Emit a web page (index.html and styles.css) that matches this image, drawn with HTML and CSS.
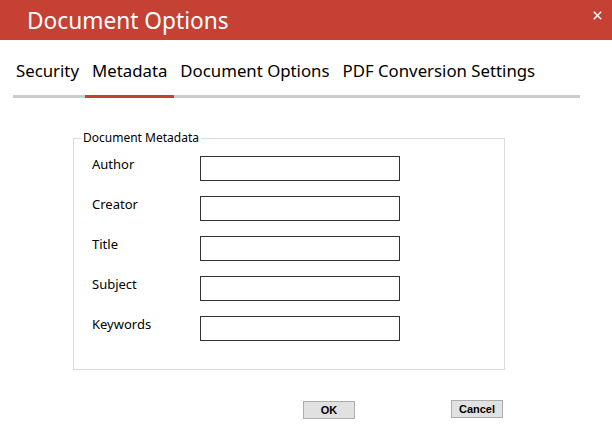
FILE: index.html
```html
<!DOCTYPE html>
<html lang="en">
<head>
<meta charset="utf-8">
<title>Document Options</title>
<link rel="stylesheet" href="styles.css">
</head>
<body>
<div class="dialog">
  <header class="titlebar">
    <h1 class="title">Document Options</h1>
    <span class="close" aria-label="Close">
      <svg width="9" height="9" viewBox="0 0 9 9"><path d="M0.8 0.8 L8.2 8.2 M8.2 0.8 L0.8 8.2" stroke="#fff" stroke-width="1.5" fill="none"/></svg>
    </span>
  </header>
  <nav class="tabs">
    <span class="tab">Security</span>
    <span class="tab active">Metadata</span>
    <span class="tab">Document Options</span>
    <span class="tab">PDF Conversion Settings</span>
  </nav>
  <fieldset class="group">
    <legend class="group-title">Document Metadata</legend>
    <div class="form">
      <label class="label">Author</label><input class="field" type="text">
      <label class="label">Creator</label><input class="field" type="text">
      <label class="label">Title</label><input class="field" type="text">
      <label class="label">Subject</label><input class="field" type="text">
      <label class="label">Keywords</label><input class="field" type="text">
    </div>
  </fieldset>
  <div class="buttons">
    <button class="btn btn-ok">OK</button>
    <button class="btn btn-cancel">Cancel</button>
  </div>
</div>
</body>
</html>
```

FILE: styles.css
```css
html, body {
  margin: 0;
  padding: 0;
  background: #ffffff;
}

body {
  font-family: "Noto Sans", "Open Sans", sans-serif;
  color: #000000;
}

.titlebar {
  height: 40px;
  box-sizing: border-box;
  background: #c44133;
  display: flex;
  justify-content: space-between;
  align-items: flex-start;
  padding: 0 10px 0 27px;
}

.title {
  margin: 0;
  padding-top: 2px;
  font-weight: normal;
  font-size: 22.7px;
  line-height: 38px;
  color: #ffffff;
}

.close {
  display: block;
  width: 9px;
  height: 9px;
  margin-top: 11px;
}

.close svg {
  display: block;
}

.tabs {
  display: flex;
  gap: 13px;
  margin: 20px 32px 0 13px;
  padding: 0 0 13px 3px;
  border-bottom: 3px solid #cccccc;
  font-size: 16.8px;
  line-height: 22px;
}

.tab {
  position: relative;
  white-space: nowrap;
}

.tab.active::after {
  content: "";
  position: absolute;
  left: -7px;
  right: -7px;
  bottom: -16px;
  height: 3px;
  background: #c44133;
}

.group {
  box-sizing: border-box;
  width: 432px;
  margin: 31px 0 0 73px;
  padding: 0;
  border: 1px solid #d9d9d9;
  min-inline-size: 0;
}

.group-title {
  margin-left: 7px;
  padding: 0 2px;
  font-size: 12px;
  line-height: 18px;
}

.form {
  display: grid;
  grid-template-columns: 108px 200px;
  row-gap: 15px;
  padding: 9px 0 28px 18px;
}

.label {
  font-size: 13px;
  line-height: 16px;
}

.field {
  box-sizing: border-box;
  width: 200px;
  height: 25px;
  margin: 0;
  padding: 0 3px;
  border: 1px solid #333333;
  border-radius: 0;
  background: #ffffff;
  outline: none;
}

.buttons {
  display: flex;
  align-items: flex-start;
  gap: 96px;
  margin-top: 30px;
  padding-left: 303px;
}

.btn {
  box-sizing: border-box;
  width: 52px;
  height: 18px;
  margin: 0;
  padding: 0;
  border: 1px solid #adadad;
  border-radius: 0;
  background: #e1e1e1;
  font-family: "Liberation Sans", Arial, sans-serif;
  font-weight: bold;
  font-size: 11px;
  line-height: 16px;
  color: #000000;
}

.btn-ok {
  margin-top: 1px;
}
```
